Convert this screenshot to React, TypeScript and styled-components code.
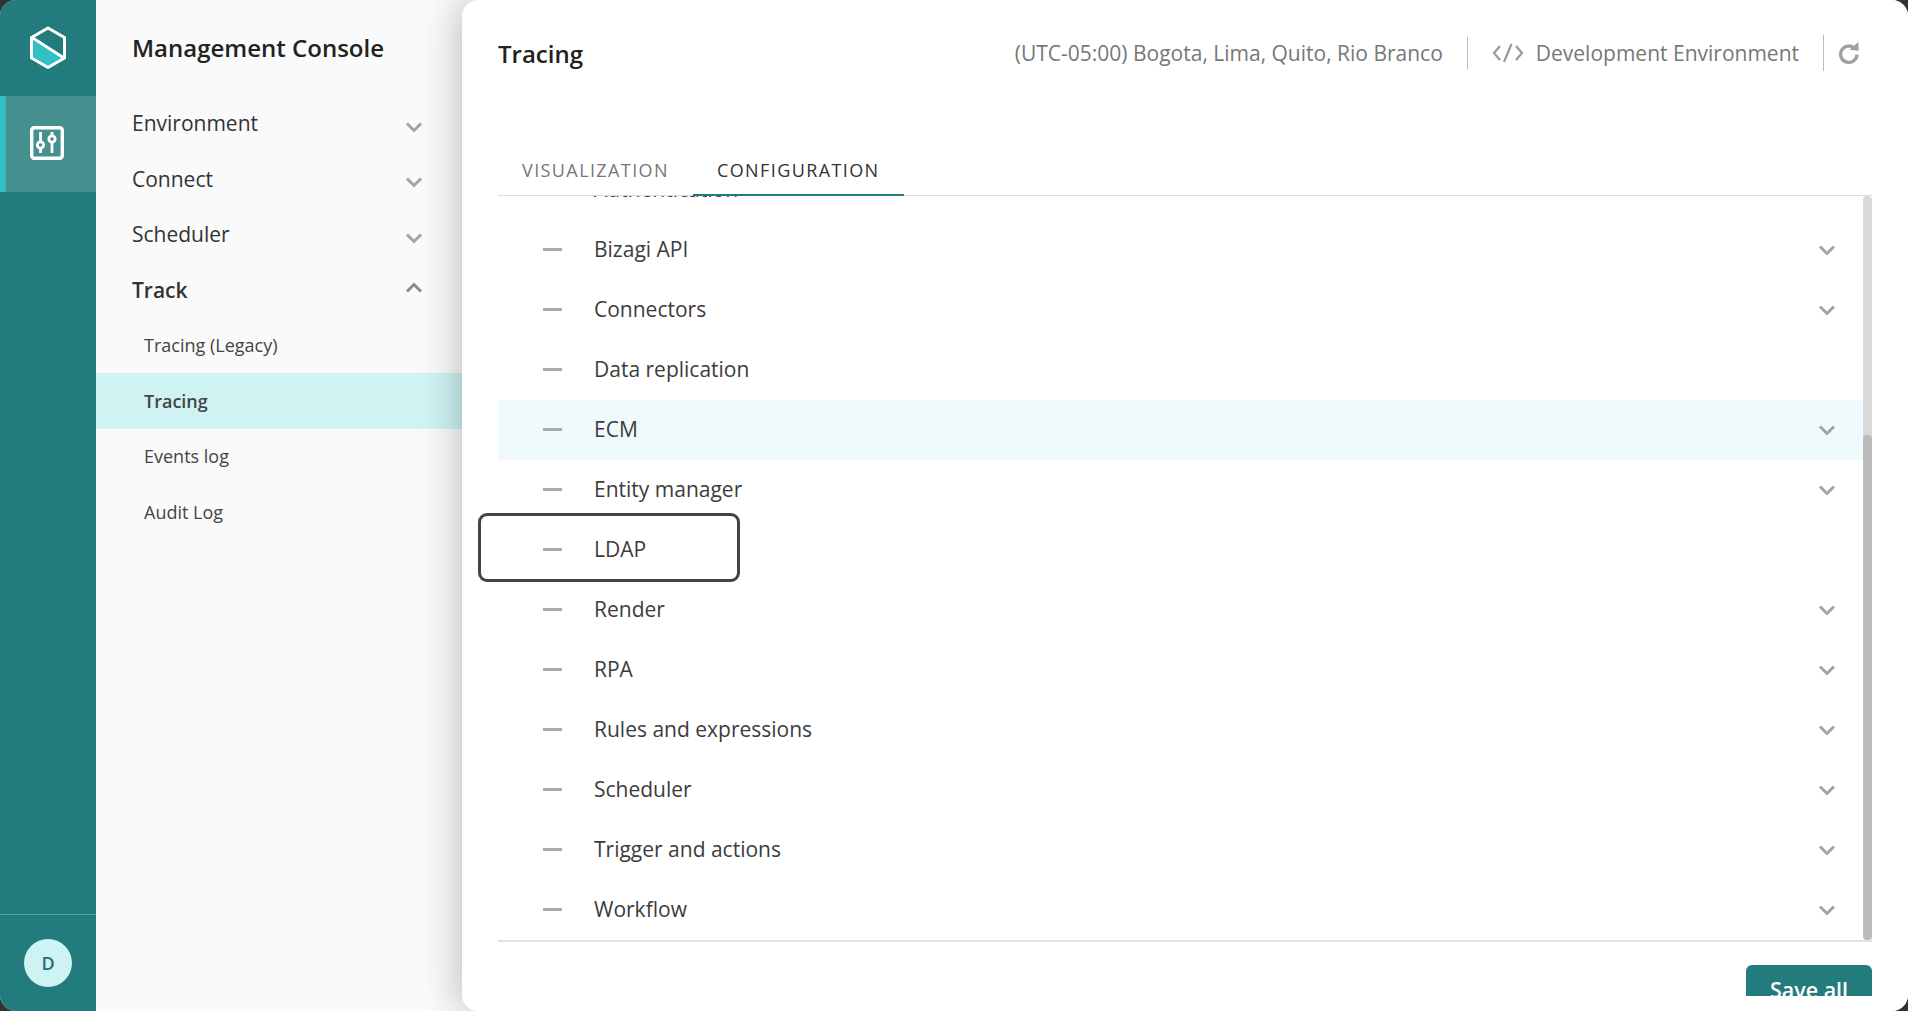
import React from "react";
import styled, { createGlobalStyle } from "styled-components";

const GlobalStyle = createGlobalStyle`
  html, body {
    margin: 0;
    padding: 0;
    background: #333;
    font-family: "Open Sans", "Liberation Sans", sans-serif;
  }
`;

const menu = [
  { label: "Environment" },
  { label: "Connect" },
  { label: "Scheduler" },
];
const subMenu = ["Tracing (Legacy)", "Tracing", "Events log", "Audit Log"];
const rows = [
  { label: "Authentication", more: true },
  { label: "Bizagi API", more: true },
  { label: "Connectors", more: true },
  { label: "Data replication" },
  { label: "ECM", more: true, hover: true },
  { label: "Entity manager", more: true },
  { label: "LDAP", focus: true },
  { label: "Render", more: true },
  { label: "RPA", more: true },
  { label: "Rules and expressions", more: true },
  { label: "Scheduler", more: true },
  { label: "Trigger and actions", more: true },
  { label: "Workflow", more: true },
];

const Chevron = ({ up }: { up?: boolean }) => (
  <svg width="18" height="13" viewBox="0 0 18 13" fill="none">
    <path
      d={up ? "M2 10.5 9 3.5l7 7" : "M2 2.5l7 7 7-7"}
      stroke={up ? "#8c8c8c" : "#a3a3a3"}
      strokeWidth="3"
    />
  </svg>
);

const Logo = () => (
  <svg width="38" height="44" viewBox="0 0 38 44" fill="none">
    <path d="M3 13.5 34 32.5 19 41 3 32Z" fill="#32c0c4" />
    <path
      d="M19 2 35.5 11.5V32L19 41.5 2.5 32V11.5Z"
      stroke="#fff"
      strokeWidth="3"
      strokeLinejoin="round"
    />
    <path d="M3 11.5 35 32" stroke="#fff" strokeWidth="3" />
  </svg>
);

const SlidersIcon = () => (
  <svg width="34" height="34" viewBox="0 0 34 34" fill="none" stroke="#fff">
    <rect x="1.7" y="1.700" width="30.600" height="30.600" rx="2.500" strokeWidth="3.400" />
    <path d="M10.500 6v21M22 6v21" strokeWidth="2.800" />
    <circle cx="10.500" cy="19" r="3.200" fill="#469090" strokeWidth="2.800" />
    <circle cx="22" cy="13" r="3.200" fill="#469090" strokeWidth="2.800" />
  </svg>
);

const CodeIcon = () => (
  <svg width="32" height="20" viewBox="0 0 32 20" fill="none" stroke="#999" strokeWidth="2.200">
    <path d="M8 3 2 10l6 7M24 3l6 7-6 7M19.500 1 12 19" />
  </svg>
);

const RefreshIcon = () => (
  <svg width="22" height="22" viewBox="0 0 22 22" fill="none">
    <path d="M15.500 5.500A8.200 8.200 0 1 0 19 12.500" stroke="#a0a0a0" strokeWidth="3.300" />
    <path d="M11.500 7.800 20.800 8.800 20.300 0Z" fill="#a0a0a0" />
  </svg>
);

export default function App() {
  return (
    <>
      <GlobalStyle />
      <Shell>
        <Rail>
          <LogoBox>
            <Logo />
          </LogoBox>
          <RailItem>
            <SlidersIcon />
          </RailItem>
          <RailFooter>
            <Avatar>D</Avatar>
          </RailFooter>
        </Rail>

        <SideNav>
          <NavTitle>Management Console</NavTitle>
          {menu.map((item) => (
            <NavItem key={item.label}>
              {item.label}
              <Chevron />
            </NavItem>
          ))}
          <NavItem $open>
            Track
            <Chevron up />
          </NavItem>
          {subMenu.map((item) => (
            <SubItem key={item} $active={item === "Tracing"}>
              {item}
            </SubItem>
          ))}
        </SideNav>

        <Main>
          <Header>
            <PageTitle>Tracing</PageTitle>
            <HeaderInfo>
              <InfoText>(UTC-05:00) Bogota, Lima, Quito, Rio Branco</InfoText>
              <Divider />
              <CodeIcon />
              <InfoText>Development Environment</InfoText>
              <Divider $tall />
              <RefreshIcon />
            </HeaderInfo>
          </Header>

          <Tabs>
            <Tab>VISUALIZATION</Tab>
            <Tab $active>CONFIGURATION</Tab>
          </Tabs>

          <ListFrame>
            <ListClip>
              <List>
                {rows.map((row) => (
                  <Row key={row.label} $hover={row.hover}>
                    <Dash />
                    <RowLabel>{row.label}</RowLabel>
                    {row.more && <Chevron />}
                    {row.focus && <FocusRing />}
                  </Row>
                ))}
              </List>
            </ListClip>
            <ScrollTrack>
              <ScrollThumb />
            </ScrollTrack>
          </ListFrame>

          <Footer>
            <SaveButton>Save all</SaveButton>
          </Footer>
        </Main>
      </Shell>
    </>
  );
}

const Shell = styled.div`
  width: 1908px;
  height: 1011px;
  display: flex;
  overflow: hidden;
  border-radius: 16px;
  background: #fafafa;
`;

const Rail = styled.aside`
  width: 96px;
  flex: none;
  display: flex;
  flex-direction: column;
  background: #227b7c;
`;

const LogoBox = styled.div`
  height: 96px;
  display: flex;
  align-items: center;
  justify-content: center;
`;

const RailItem = styled.div`
  height: 96px;
  display: flex;
  align-items: center;
  justify-content: center;
  box-sizing: border-box;
  background: #469090;
  border-left: 6px solid #32c0c4;
  padding: 0 9px 3px 0;
`;

const RailFooter = styled.div`
  margin-top: auto;
  height: 97px;
  box-sizing: border-box;
  border-top: 1px solid #5c9fa0;
  display: flex;
  justify-content: center;
  padding-top: 24px;
`;

const Avatar = styled.div`
  width: 48px;
  height: 48px;
  border-radius: 50%;
  background: #cff3f3;
  color: #1f6f78;
  font-size: 18px;
  font-weight: 600;
  display: flex;
  align-items: center;
  justify-content: center;
`;

const SideNav = styled.nav`
  width: 366px;
  flex: none;
  display: flex;
  flex-direction: column;
  background: #fafafa;
`;

const NavTitle = styled.h1`
  margin: 0;
  height: 95.5px;
  padding: 32px 0 0 36px;
  box-sizing: border-box;
  font-size: 24px;
  line-height: 32px;
  font-weight: 600;
  color: #222;
`;

const NavItem = styled.div<{ $open?: boolean }>`
  height: 55.5px;
  padding: 0 39px 0 36px;
  display: flex;
  align-items: center;
  justify-content: space-between;
  font-size: 21px;
  font-weight: ${(p) => (p.$open ? 600 : 400)};
  color: #333;

  svg {
    margin-top: ${(p) => (p.$open ? "-5px" : "8px")};
  }
`;

const SubItem = styled.div<{ $active?: boolean }>`
  height: 55.5px;
  padding-left: 48px;
  display: flex;
  align-items: center;
  font-size: 18px;
  font-weight: ${(p) => (p.$active ? 600 : 400)};
  color: #444;
  background: ${(p) => (p.$active ? "#cff3f3" : "transparent")};
`;

const Main = styled.main`
  flex: 1;
  min-width: 0;
  height: 1011px;
  box-sizing: border-box;
  padding: 0 36px;
  overflow: hidden;
  display: flex;
  flex-direction: column;
  background: #fff;
  border-radius: 16px 0 0 16px;
  box-shadow: -6px 0 36px rgba(0, 0, 0, 0.22);
  position: relative;
`;

const Header = styled.header`
  height: 110px;
  flex: none;
  display: flex;
  align-items: flex-start;
  justify-content: space-between;
  padding-top: 35px;
  box-sizing: border-box;
`;

const PageTitle = styled.h2`
  margin: 0;
  font-size: 24px;
  line-height: 38px;
  font-weight: 600;
  color: #222;
`;

const HeaderInfo = styled.div`
  display: flex;
  align-items: center;
  gap: 12px;
  margin-right: 12px;
  height: 36px;
`;

const InfoText = styled.span`
  font-size: 21px;
  color: #777;
`;

const Divider = styled.div<{ $tall?: boolean }>`
  width: 1px;
  height: ${(p) => (p.$tall ? 36 : 32)}px;
  margin: 0 ${(p) => (p.$tall ? 2 : 12)}px 0 12px;
  background: #bbb;
`;

const Tabs = styled.div`
  height: 86px;
  flex: none;
  display: flex;
  align-items: flex-end;
  border-bottom: 1px solid #ddd;
  box-sizing: border-box;
`;

const Tab = styled.div<{ $active?: boolean }>`
  height: 52px;
  padding: 1px 24px 0;
  margin-bottom: -1px;
  display: flex;
  align-items: center;
  box-sizing: border-box;
  font-size: 18px;
  letter-spacing: 1.4px;
  color: ${(p) => (p.$active ? "#333" : "#777")};
  border-bottom: 2px solid ${(p) => (p.$active ? "#227b7c" : "transparent")};
`;

const ListFrame = styled.div`
  height: 746px;
  flex: none;
  display: flex;
  border-bottom: 2px solid #e2e2e2;
  box-sizing: border-box;
`;

const ListClip = styled.div`
  flex: 1;
  min-width: 0;
  overflow: hidden;
  padding-left: 20px;
  margin-left: -20px;
`;

const List = styled.div`
  margin-top: -36px;
`;

const Row = styled.div<{ $hover?: boolean }>`
  height: 60px;
  padding: 0 27px 0 45px;
  display: flex;
  align-items: center;
  position: relative;
  background: ${(p) => (p.$hover ? "#f0fafc" : "transparent")};
`;

const Dash = styled.span`
  width: 19px;
  height: 3px;
  flex: none;
  margin-bottom: 2px;
  background: #aaa;
`;

const RowLabel = styled.span`
  flex: 1;
  margin: 0 0 3px 32px;
  font-size: 21px;
  color: #3c3c3c;
`;

const FocusRing = styled.div`
  position: absolute;
  left: -20px;
  top: -7px;
  width: 262px;
  height: 69px;
  box-sizing: border-box;
  border: 3px solid #444;
  border-radius: 9px;
`;

const ScrollTrack = styled.div`
  width: 9px;
  flex: none;
  background: #d9d9d9;
  border-radius: 4px;
  display: flex;
  flex-direction: column;
  justify-content: flex-end;
`;

const ScrollThumb = styled.div`
  height: 505px;
  background: #bbb;
  border-radius: 4px;
`;

const Footer = styled.div`
  display: flex;
  justify-content: flex-end;
  padding-top: 23px;
  height: 54px;
  overflow: hidden;
  flex: none;
  box-sizing: border-box;
`;

const SaveButton = styled.button`
  width: 126px;
  height: 48px;
  flex: none;
  border: 0;
  border-radius: 6px;
  background: #227b7c;
  color: #fff;
  font-family: inherit;
  font-size: 21.5px;
  font-weight: 600;
`;
